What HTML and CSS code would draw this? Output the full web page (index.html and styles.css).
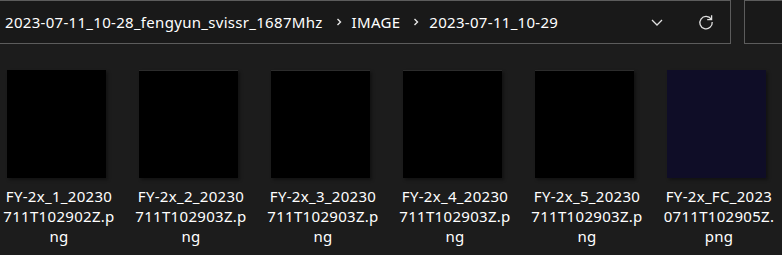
FILE: index.html
```html
<!DOCTYPE html>
<html>
<head>
<meta charset="utf-8">
<link rel="stylesheet" href="styles.css">
</head>
<body>
<div class="topbar">
  <div class="address">
    <div class="crumbs">
      <span class="crumb">2023-07-11_10-28_fengyun_svissr_1687Mhz</span>
      <svg class="sep" width="8" height="10" viewBox="0 0 8 10"><path d="M2.5 2 L5.5 5 L2.5 8" fill="none" stroke="#e6e6e6" stroke-width="1.4"/></svg>
      <span class="crumb">IMAGE</span>
      <svg class="sep" width="8" height="10" viewBox="0 0 8 10"><path d="M2.5 2 L5.5 5 L2.5 8" fill="none" stroke="#e6e6e6" stroke-width="1.4"/></svg>
      <span class="crumb">2023-07-11_10-29</span>
    </div>
    <svg class="dropdown" width="14" height="10" viewBox="0 0 14 10"><path d="M2 3 L7 8 L12 3" fill="none" stroke="#e0e0e0" stroke-width="1.3"/></svg>
    <svg class="refresh" width="18" height="18" viewBox="0 0 18 18"><path d="M14.2 6.2 A6.2 6.2 0 1 0 15.2 9" fill="none" stroke="#e0e0e0" stroke-width="1.3"/><path d="M14.6 2.2 V6.6 H10.2" fill="none" stroke="#e0e0e0" stroke-width="1.3"/></svg>
  </div>
  <div class="search"></div>
</div>
<div class="grid">
  <div class="tile"><div class="thumb"></div><div class="name">FY-2x_1_20230<br>711T102902Z.p<br>ng</div></div>
  <div class="tile"><div class="thumb lined"></div><div class="name">FY-2x_2_20230<br>711T102903Z.p<br>ng</div></div>
  <div class="tile"><div class="thumb lined"></div><div class="name">FY-2x_3_20230<br>711T102903Z.p<br>ng</div></div>
  <div class="tile"><div class="thumb lined"></div><div class="name">FY-2x_4_20230<br>711T102903Z.p<br>ng</div></div>
  <div class="tile"><div class="thumb lined"></div><div class="name">FY-2x_5_20230<br>711T102903Z.p<br>ng</div></div>
  <div class="tile"><div class="thumb fc"></div><div class="name">FY-2x_FC_2023<br>0711T102905Z.<br>png</div></div>
</div>
</body>
</html>
```

FILE: styles.css
```css
html, body {
  margin: 0;
  padding: 0;
  background: #1c1c1c;
  overflow: hidden;
  font-family: "Noto Sans", "Open Sans", sans-serif;
  color: #ffffff;
}
.topbar {
  display: flex;
  height: 44px;
}
.address {
  width: 730px;
  height: 42px;
  box-sizing: content-box;
  border: 1px solid #5c5c5c;
  border-left: none;
  background: #191919;
  display: flex;
  align-items: center;
}
.crumbs {
  flex: 1;
  display: flex;
  align-items: center;
  padding-left: 5px;
  font-size: 15px;
  letter-spacing: 0.3px;
  white-space: nowrap;
}
.sep {
  margin: 0 9px 0 12px;
}
.dropdown {
  margin-right: 33px;
}
.refresh {
  margin-right: 15px;
}
.search {
  margin-left: 13px;
  flex: 1;
  height: 42px;
  border: 1px solid #5c5c5c;
  border-right: none;
  background: #191919;
}
.grid {
  display: flex;
  margin-left: -7px;
  margin-top: 26px;
}
.tile {
  width: 132px;
  flex: none;
  display: flex;
  flex-direction: column;
  align-items: center;
}
.thumb {
  width: 99px;
  height: 108px;
  background: #000000;
  margin-left: -5px;
  box-shadow: 2px 2px 3px rgba(0, 0, 0, 0.35);
}
.thumb.lined {
  border-top: 1px solid #2c2c2c;
  height: 107px;
}
.thumb.fc {
  background: #0f0d27;
}
.name {
  margin-top: 8px;
  font-size: 15px;
  letter-spacing: 0.3px;
  line-height: 20px;
  text-align: center;
  white-space: nowrap;
}
```
